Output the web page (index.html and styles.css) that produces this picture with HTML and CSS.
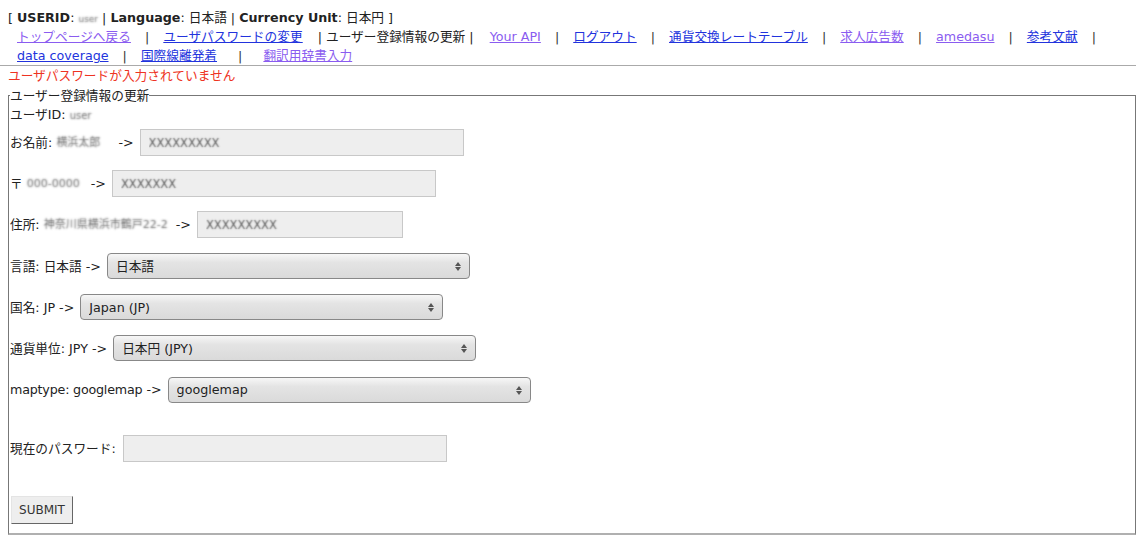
FILE: index.html
```html
<!DOCTYPE html>
<html lang="ja">
<head>
    <meta charset="UTF-8">
    <title>ユーザー登録情報の更新</title>
<link rel="stylesheet" href="styles.css">
</head>
<body>
    <div class="status">
        [ <b>USERID</b>: <span class="blur tiny">user</span> | <b>Language</b>: 日本語 | <b>Currency Unit</b>: 日本円 ]
    </div>
    <div class="nav">
        <a href="#" class="visited">トップページへ戻る</a> <span class="sep">|</span>
        <a href="#">ユーザパスワードの変更</a> <span class="here">| ユーザー登録情報の更新 |</span>
        <a href="#" class="visited">Your API</a> <span class="sep">|</span>
        <a href="#">ログアウト</a> <span class="sep">|</span>
        <a href="#">通貨交換レートテーブル</a> <span class="sep">|</span>
        <a href="#" class="visited">求人広告数</a> <span class="sep">|</span>
        <a href="#" class="visited">amedasu</a> <span class="sep">|</span>
        <a href="#">参考文献</a> <span class="sep">|</span>
        <a href="#">data coverage</a> <span class="sep">|</span>
        <a href="#">国際線離発着</a> <span class="sep wide">|</span>
        <a href="#" class="visited">翻訳用辞書入力</a>
    </div>
    <hr>
    <div class="error">ユーザパスワードが入力されていません</div>

    <form>
    <fieldset>
        <legend>ユーザー登録情報の更新</legend>
        <div class="uid">ユーザID: <span class="blur small">user</span></div>

        <div class="row">
            <span>お名前: </span><span class="blur val v-name">横浜太郎</span><span class="arrow">-&gt;</span>
            <input type="text" class="txt" value="XXXXXXXXX">
        </div>
        <div class="row">
            <span>〒 </span><span class="blur val v-zip">000-0000</span><span class="arrow">-&gt;</span>
            <input type="text" class="txt" value="XXXXXXX">
        </div>
        <div class="row">
            <span>住所: </span><span class="blur val v-addr">神奈川県横浜市鶴戸22-2</span><span class="arrow">-&gt;</span>
            <input type="text" class="txt short" value="XXXXXXXXX">
        </div>
        <div class="row">
            <span>言語: 日本語</span><span class="arrow">-&gt;</span>
            <span class="sel"><select><option>日本語</option></select></span>
        </div>
        <div class="row">
            <span>国名: JP</span><span class="arrow">-&gt;</span>
            <span class="sel"><select><option>Japan (JP)</option></select></span>
        </div>
        <div class="row">
            <span>通貨単位: JPY</span><span class="arrow">-&gt;</span>
            <span class="sel"><select><option>日本円 (JPY)</option></select></span>
        </div>
        <div class="row">
            <span class="tight">maptype: googlemap</span><span class="arrow">-&gt;</span>
            <span class="sel"><select><option>googlemap</option></select></span>
        </div>

        <div class="row pass">
            <span>現在のパスワード: </span>
            <input type="password" class="txt">
        </div>

        <button type="submit">SUBMIT</button>
    </fieldset>
    </form>
</body>
</html>
```

FILE: styles.css
```css
body {
    font-family: "DejaVu Sans", "Noto Sans CJK JP", sans-serif;
    font-size: 12.7px;
    line-height: 19px;
    color: #222;
    margin: 0 10px 0 0;
    padding-top: 8px;
}

b {
    font-weight: bold;
}

.status {
    padding-left: 8px;
    height: 19px;
}

.nav {
    padding-left: 17px;
}

.nav a {
    color: #2233dd;
    white-space: nowrap;
}

.nav a.visited {
    color: #8a5cf0;
}

.sep {
    padding: 0 10px;
    color: #333;
}

.sep.wide {
    padding: 0 17px;
}

.here {
    padding: 0 12px 0 11px;
    white-space: nowrap;
}

hr {
    margin: 0;
    border: 0;
    border-top: 1px solid #aaa;
    height: 0;
}

.error {
    color: #ee3322;
    padding-left: 8px;
    height: 19px;
}

fieldset {
    margin: 1px 0 0 8px;
    padding: 0 0 9px 1px;
    border: 1px solid #777;
    border-bottom: 2px solid #b0b0b0;
    box-shadow: 0 1px 0 #d6d6d6;
}

legend {
    padding: 0;
    line-height: 19px;
    height: 19px;
}

.blur {
    color: transparent;
    text-shadow: 0 0 2px rgba(90, 90, 90, 0.9);
}

.blur.tiny {
    font-size: 9px;
}

.blur.small {
    font-size: 10px;
}

.blur.val {
    display: inline-block;
    font-size: 11px;
    white-space: nowrap;
}

.v-name {
    width: 58px;
}

.v-zip {
    width: 60px;
}

.v-addr {
    width: 128px;
}

.uid {
    height: 19px;
    margin-bottom: 5px;
}

.row {
    display: flex;
    align-items: center;
    height: 27px;
    margin-bottom: 14.2px;
    white-space: pre;
}

.tight {
    letter-spacing: -0.2px;
}

.arrow {
    padding: 0 4px;
}

.txt {
    width: 324px;
    height: 27px;
    box-sizing: border-box;
    margin: 0 0 0 2px;
    padding: 0 8px;
    border: 1px solid #c8c8c8;
    background: #eee;
    font-family: "DejaVu Sans", sans-serif;
    font-size: 11.5px;
    color: transparent;
    text-shadow: 0 0 1.5px rgba(80, 80, 80, 0.9);
}

.txt.short {
    width: 206px;
}

.sel {
    position: relative;
    display: inline-block;
    margin-left: 2px;
}

.sel select {
    appearance: none;
    -webkit-appearance: none;
    width: 363px;
    height: 26px;
    margin: 0;
    padding: 0 24px 0 8px;
    border: 1px solid #888;
    border-radius: 4px;
    background: linear-gradient(to bottom, #f7f7f7 0%, #e4e4e4 35%, #dadada 100%);
    font-family: "DejaVu Sans", "Noto Sans CJK JP", sans-serif;
    font-size: 12.7px;
    color: #222;
    display: block;
}

.sel::before,
.sel::after {
    content: "";
    position: absolute;
    right: 9px;
    border-left: 3px solid transparent;
    border-right: 3px solid transparent;
    pointer-events: none;
}

.sel::before {
    top: 9px;
    border-bottom: 4px solid #555;
}

.sel::after {
    top: 14px;
    border-top: 4px solid #555;
}

.row.pass {
    margin-top: 32px;
    margin-bottom: 34px;
}

.row.pass .txt {
    margin-left: 3px;
}

button {
    margin-left: 1px;
    width: 62px;
    height: 28px;
    padding: 0;
    background: #eee;
    border: 1px solid;
    border-color: #e4e4e4 #666 #666 #e4e4e4;
    font-family: "DejaVu Sans", sans-serif;
    font-size: 12px;
    color: #333;
}
```
